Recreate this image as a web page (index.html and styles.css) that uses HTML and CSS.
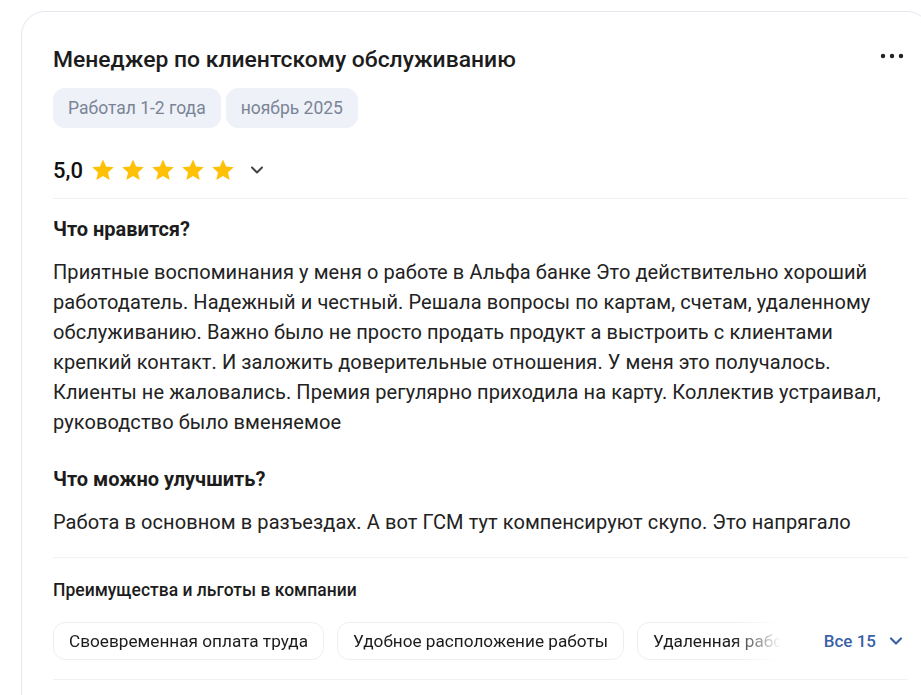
FILE: index.html
```html
<!DOCTYPE html>
<html lang="ru">
<head>
<meta charset="utf-8">
<title>Отзыв</title>
<link rel="stylesheet" href="styles.css">
</head>
<body>
<div class="card">
  <div class="head">
    <h2 class="title">Менеджер по клиентскому обслуживанию</h2>
    <button class="more" aria-label="Ещё">
      <svg width="24" height="6" viewBox="0 0 24 6"><circle cx="3" cy="3" r="2.2" fill="#222"/><circle cx="12" cy="3" r="2.2" fill="#222"/><circle cx="21" cy="3" r="2.2" fill="#222"/></svg>
    </button>
  </div>
  <div class="tags">
    <span class="tag">Работал 1-2 года</span>
    <span class="tag">ноябрь 2025</span>
  </div>
  <div class="rating">
    <span class="score">5,0</span>
    <span class="stars">
      <svg class="star" viewBox="0 0 24 24"><path d="M12 1.5l3.1 7.1 7.7.7-5.8 5.1 1.7 7.6L12 18l-6.7 4 1.7-7.6-5.8-5.1 7.7-.7z"/></svg>
      <svg class="star" viewBox="0 0 24 24"><path d="M12 1.5l3.1 7.1 7.7.7-5.8 5.1 1.7 7.6L12 18l-6.7 4 1.7-7.6-5.8-5.1 7.7-.7z"/></svg>
      <svg class="star" viewBox="0 0 24 24"><path d="M12 1.5l3.1 7.1 7.7.7-5.8 5.1 1.7 7.6L12 18l-6.7 4 1.7-7.6-5.8-5.1 7.7-.7z"/></svg>
      <svg class="star" viewBox="0 0 24 24"><path d="M12 1.5l3.1 7.1 7.7.7-5.8 5.1 1.7 7.6L12 18l-6.7 4 1.7-7.6-5.8-5.1 7.7-.7z"/></svg>
      <svg class="star" viewBox="0 0 24 24"><path d="M12 1.5l3.1 7.1 7.7.7-5.8 5.1 1.7 7.6L12 18l-6.7 4 1.7-7.6-5.8-5.1 7.7-.7z"/></svg>
    </span>
    <svg class="chev" width="16" height="16" viewBox="0 0 16 16"><path d="M3 5.5l5 5 5-5" fill="none" stroke="#444" stroke-width="2" stroke-linecap="round" stroke-linejoin="round"/></svg>
  </div>
  <hr class="sep sep-top">
  <h3 class="q">Что нравится?</h3>
  <p class="txt">Приятные воспоминания у меня о работе в Альфа банке Это действительно хороший работодатель. Надежный и честный. Решала вопросы по картам, счетам, удаленному обслуживанию. Важно было не просто продать продукт а выстроить с клиентами крепкий контакт. И заложить доверительные отношения. У меня это получалось. Клиенты не жаловались. Премия регулярно приходила на карту. Коллектив устраивал, руководство было вменяемое</p>
  <h3 class="q q2">Что можно улучшить?</h3>
  <p class="txt">Работа в основном в разъездах. А вот ГСМ тут компенсируют скупо. Это напрягало</p>
  <hr class="sep sep-mid">
  <h4 class="perks-title">Преимущества и льготы в компании</h4>
  <div class="perks">
    <div class="chips">
      <span class="chip">Своевременная оплата труда</span>
      <span class="chip">Удобное расположение работы</span>
      <span class="chip">Удаленная работа</span>
    </div>
    <button class="all">Все 15
      <svg width="16" height="16" viewBox="0 0 16 16"><path d="M3 5.5l5 5 5-5" fill="none" stroke="#3a62a7" stroke-width="2.2" stroke-linecap="round" stroke-linejoin="round"/></svg>
    </button>
  </div>
  <hr class="sep sep-bot">
</div>
</body>
</html>
```

FILE: styles.css
```css
html, body {
  margin: 0;
  background: #ffffff;
  overflow: hidden;
}
body {
  padding: 11px 0 0 21px;
  font-family: Roboto, "Liberation Sans", Arial, sans-serif;
  color: #222222;
}
.card {
  box-sizing: border-box;
  width: 910px;
  height: 720px;
  border: 1px solid #e4e7ee;
  border-radius: 24px;
  padding: 34px 22px 0 31px;
  background: #fff;
}
.head {
  display: flex;
  align-items: center;
  justify-content: space-between;
}
.title {
  margin: 0;
  font-size: 22.9px;
  line-height: 28px;
  font-weight: 500;
  color: #1c1c1c;
}
.more {
  border: 0;
  background: none;
  padding: 0;
  margin-right: 4px;
  margin-top: -8px;
  display: flex;
}
.tags {
  display: flex;
  gap: 5px;
  margin-top: 14px;
}
.tag {
  height: 40px;
  display: inline-flex;
  align-items: center;
  padding: 0 15px;
  border-radius: 12px;
  background: #eef1f7;
  color: #7a8496;
  font-size: 17.5px;
}
.rating {
  display: flex;
  align-items: center;
  height: 36px;
  margin-top: 24px;
}
.score {
  font-size: 22px;
  font-weight: 500;
  color: #111;
  margin-right: 8px;
}
.stars {
  display: flex;
  gap: 6px;
}
.star {
  width: 24px;
  height: 24px;
  fill: #ffc107;
}
.chev {
  margin-left: 14px;
}
.sep {
  border: 0;
  height: 1px;
  background: #f0f2f6;
  margin: 0;
}
.sep-top { margin-top: 10px; }
.q {
  margin: 18px 0 0;
  font-size: 20px;
  line-height: 24px;
  font-weight: 700;
  color: #1c1c1c;
}
.q2 { margin-top: 30px; }
.txt {
  margin: 16px 0 0;
  font-size: 20px;
  line-height: 30px;
  letter-spacing: 0.08px;
  color: #222;
}
.sep-mid { margin-top: 20px; }
.perks-title {
  margin: 21px 0 0;
  font-size: 17.5px;
  line-height: 22px;
  font-weight: 500;
  color: #1c1c1c;
}
.perks {
  display: flex;
  align-items: center;
  margin-top: 21px;
}
.chips {
  display: flex;
  gap: 13px;
  width: 738px;
  overflow: hidden;
  -webkit-mask-image: linear-gradient(to right, #000 680px, transparent 728px);
  mask-image: linear-gradient(to right, #000 680px, transparent 728px);
}
.chip {
  flex: none;
  height: 38px;
  box-sizing: border-box;
  display: inline-flex;
  align-items: center;
  padding: 0 15px;
  border: 1px solid #eceef4;
  border-radius: 12px;
  font-size: 17.2px;
  color: #1c1c1c;
  white-space: nowrap;
}
.all {
  margin-left: auto;
  margin-right: 4px;
  border: 0;
  background: none;
  padding: 0;
  display: flex;
  align-items: center;
  gap: 12px;
  font-family: inherit;
  font-size: 17px;
  font-weight: 500;
  color: #3a62a7;
}
.sep-bot { margin-top: 19px; }
```
